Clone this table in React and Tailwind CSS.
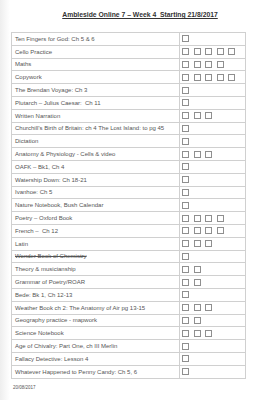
const rows = [
  ["Ten Fingers for God: Ch 5 & 6", 1],
  ["Cello Practice", 5],
  ["Maths", 4],
  ["Copywork", 5],
  ["The Brendan Voyage: Ch 3", 1],
  ["Plutarch – Julius Caesar:  Ch 11", 1],
  ["Written Narration", 3],
  ["Churchill’s Birth of Britain: ch 4 The Lost Island: to pg 45", 1],
  ["Dictation", 1],
  ["Anatomy & Physiology - Cells & video", 3],
  ["OAFK – Bk1, Ch 4", 1],
  ["Watership Down: Ch 18-21", 1],
  ["Ivanhoe: Ch 5", 1],
  ["Nature Notebook, Bush Calendar", 1],
  ["Poetry – Oxford Book", 4],
  ["French –  Ch 12", 4],
  ["Latin", 3],
  ["Wonder Book of Chemistry", 1, true],
  ["Theory & musicianship", 2],
  ["Grammar of Poetry/ROAR", 2],
  ["Bede: Bk 1, Ch 12-13", 1],
  ["Weather Book ch 2: The Anatomy of Air pg 13-15", 3],
  ["Geography practice - mapwork", 2],
  ["Science Notebook", 3],
  ["Age of Chivalry: Part One, ch III Merlin", 1],
  ["Fallacy Detective: Lesson 4", 1],
  ["Whatever Happened to Penny Candy: Ch 5, 6", 1],
];

function Row({ label, boxes, struck }) {
  return (
    <div className="flex h-[12.8px] border-b border-[#d0d0d0]">
      <div className="w-[168px] border-r border-[#d0d0d0] pl-[3px] flex items-center whitespace-pre">
        <span className={struck ? "line-through" : ""}>{label}</span>
      </div>
      <div className="flex-1 flex items-center gap-[4.6px] pl-[2px]">
        {Array.from({ length: boxes }).map((_, i) => (
          <div key={i} className="w-[7px] h-[7px] border border-[#8f8f8f]" />
        ))}
      </div>
    </div>
  );
}

export default function App() {
  return (
    <div
      className="w-[280px] h-[400px] bg-white text-[#555] bg-[linear-gradient(to_right,#eeeeee,#ffffff_10px)] leading-none"
      style={{ fontFamily: '"Liberation Sans", Arial, sans-serif' }}
    >
      <div className="pt-[12px] h-[32px] text-center text-[6.8px] font-bold">
        <span className="underline text-[#333]">
          Ambleside Online 7 – Week 4&nbsp; Starting 21/8/2017
        </span>
      </div>
      <div className="ml-[11px] w-[235px] border-t border-l border-r border-[#d0d0d0] text-[6px]">
        {rows.map(([label, boxes, struck]) => (
          <Row key={label} label={label} boxes={boxes} struck={struck} />
        ))}
      </div>
      <div className="ml-[13px] mt-[7px] text-[4.5px] text-[#555]">20/08/2017</div>
    </div>
  );
}
